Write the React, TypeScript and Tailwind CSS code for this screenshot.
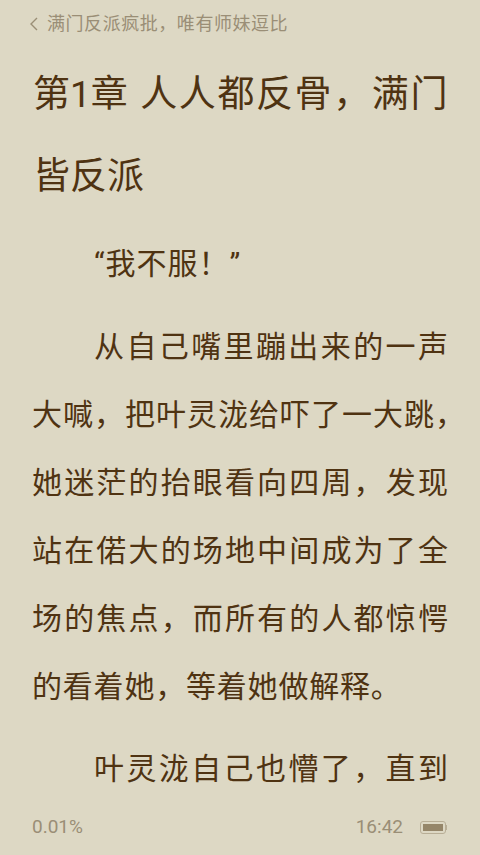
const cjk = "font-['Roboto','Noto_Sans_CJK_SC',sans-serif]";
const body = "h-[68px] flex items-center text-[30px] font-[370] leading-none text-[#4f3312]";

const Line = ({ text, indent }: { text: string; indent?: boolean }) => (
  <div className={`${body} justify-between ${indent ? "pl-[62px]" : ""}`}>
    {Array.from(text).map((c, i) => (
      <span key={i}>{c}</span>
    ))}
  </div>
);

export default function App() {
  return (
    <div className={`w-[480px] h-[855px] overflow-hidden flex flex-col bg-[#ddd8c4] ${cjk}`}>
      <div className="flex items-center h-[47px] pl-[29px] gap-[9px] text-[#9a8e76] text-[18px] tracking-[0.55px] font-[370]">
        <svg width="9" height="14" viewBox="0 0 9 14" fill="none" stroke="#9a8e76" strokeWidth="1.4">
          <path d="M8 1 L2 7 L8 13" />
        </svg>
        <span>满门反派疯批，唯有师妹逗比</span>
      </div>
      <div className="pl-[33px] pr-[31px] text-[37px] font-[370] leading-[82px] text-[#4f3312] mt-[7px]">
        <div className="flex justify-between whitespace-nowrap">
          <span>第1章 </span>
          <span className="tracking-[1.6px]">人人都反骨，满门</span>
        </div>
        <div>皆反派</div>
      </div>
      <div className="px-[32px] mt-[12px] flex-1 overflow-hidden">
        <div className={`${body} pl-[62px] tracking-[1px]`}>“我不服！”</div>
        <div className="mt-[15px]">
          <Line text="从自己嘴里蹦出来的一声" indent />
          <div className={`${body} whitespace-nowrap tracking-[1px]`}>大喊，把叶灵泷给吓了一大跳，</div>
          <Line text="她迷茫的抬眼看向四周，发现" />
          <Line text="站在偌大的场地中间成为了全" />
          <Line text="场的焦点，而所有的人都惊愕" />
          <div className={`${body} tracking-[0.8px]`}>的看着她，等着她做解释。</div>
        </div>
        <div className="mt-[14px]">
          <Line text="叶灵泷自己也懵了，直到" indent />
        </div>
      </div>
      <div className="h-[56px] flex items-center justify-between pl-[32px] pr-[33px] text-[19px] font-[370] text-[#9a8e76]">
        <span>0.01%</span>
        <div className="flex items-center gap-[17px]">
          <span>16:42</span>
          <div className="flex items-center pt-[1px]">
            <div className="w-[26px] h-[13px] border border-[#b8ae96] rounded-[3px] p-[2px]">
              <div className="w-full h-full bg-[#958669]" />
            </div>
            <div className="w-[1px] h-[5px] bg-[#b8ae96]" />
          </div>
        </div>
      </div>
    </div>
  );
}
